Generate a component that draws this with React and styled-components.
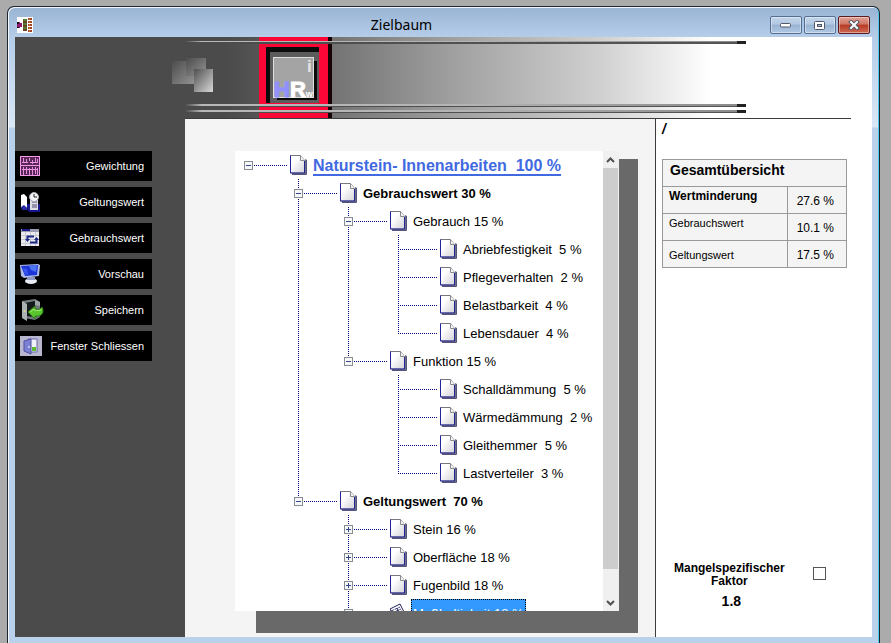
import { useState } from "react";
import styled, { createGlobalStyle } from "styled-components";

const GlobalStyle = createGlobalStyle`
  * {
    box-sizing: border-box;
  }
  body {
    margin: 0;
    background: #ababab;
    font-family: "Liberation Sans", Arial, sans-serif;
    color: #000;
  }
  button {
    font: inherit;
    border: none;
    padding: 0;
    cursor: pointer;
  }
`;

const Desktop = styled.div`
  display: flex;
  height: 100vh;
  padding: 6px 11px 0 7px;
`;

const Window = styled.div`
  flex: 1;
  display: flex;
  flex-direction: column;
  min-width: 0;
  padding: 0 7px 6px;
  border: 1px solid #1c2530;
  border-bottom: none;
  border-radius: 7px 7px 0 0;
  background: linear-gradient(
    #98b4d3 0,
    #b5cde9 30px,
    #d9e7f6 120px,
    #b9d1ea 121px
  );
  box-shadow: inset 1px 1px 0 #f4f8fc, inset -1px 0 0 #4fc8ec;
`;

/* title bar */

const TitleBar = styled.div`
  display: flex;
  align-items: center;
  height: 30px;
  padding: 6px 2px 0;
`;

const Title = styled.h1`
  flex: 1;
  margin: 0;
  text-align: center;
  font-family: "Noto Sans", "Open Sans", sans-serif;
  font-size: 14px;
  font-weight: 400;
  line-height: 20px;
`;

const WindowControls = styled.div`
  display: flex;
  gap: 2px;
`;

const ControlButton = styled.button`
  display: flex;
  align-items: center;
  justify-content: center;
  width: 32px;
  height: 18px;
  border: 1px solid ${(props) => (props.$close ? "#5b1a1f" : "#546f91")};
  border-radius: 2px;
  background: ${(props) =>
    props.$close
      ? "linear-gradient(#e0a396 0, #cf7565 45%, #b73a24 50%, #cf6a52 100%)"
      : "linear-gradient(#c3d5ea 0, #b2c8e2 45%, #98b4d3 50%, #b0c8e3 100%)"};
  box-shadow: inset 0 0 0 1px rgba(255, 255, 255, 0.4);
`;

/* banner */

const Content = styled.div`
  flex: 1;
  display: flex;
  flex-direction: column;
  min-height: 0;
  background: #fff;
`;

const Header = styled.header`
  background: linear-gradient(90deg, #4b4b4b 170px, #fff 170px);
`;

const Banner = styled.svg`
  display: block;
`;

const Rule = styled.div`
  height: 1px;
  margin: 0 21px 0 170px;
  background: #3c3c3c;
`;

const Main = styled.div`
  flex: 1;
  display: flex;
  min-height: 0;
`;

/* sidebar */

const Sidebar = styled.nav`
  display: flex;
  flex-direction: column;
  gap: 6px;
  width: 170px;
  padding: 32px 33px 0 0;
  background: #4b4b4b;
`;

const SidebarButton = styled.button`
  display: flex;
  align-items: center;
  justify-content: space-between;
  height: 30px;
  padding: 0 8px 0 5px;
  background: #000;
  color: #fff;
  font-size: 11px;
  white-space: nowrap;
`;

/* tree */

const TreeArea = styled.main`
  flex: 1;
  display: grid;
  grid-template-rows: minmax(0, 1fr);
  min-width: 0;
  padding: 32px 17px 4px 50px;
  background: #f4f4f4;
`;

const TreeShadow = styled.div`
  grid-area: 1 / 1;
  margin: 8px 0 0 21px;
  background: #696969;
`;

const TreePanel = styled.div`
  grid-area: 1 / 1;
  display: flex;
  margin: 0 19px 22px 0;
  background: #fff;
  overflow: hidden;
`;

const TreeScroll = styled.div`
  flex: 1;
  min-width: 0;
  overflow: hidden;
`;

const Branch = styled.ul`
  margin: 0;
  padding: 0 0 0 ${(props) => (props.$root ? "0" : "50px")};
  list-style: none;
`;

const Leaf = styled.li`
  background: ${(props) =>
    props.$root
      ? "none"
      : "repeating-linear-gradient(#000080 0 1px, transparent 1px 2px) 13px 0 / 1px 100% no-repeat"};

  &:last-child {
    background-size: 1px 14px;
  }
`;

const Row = styled.div`
  display: flex;
  align-items: center;
  height: 28px;
  padding-left: ${(props) => (props.$expandable ? "9px" : "13px")};
`;

const Expander = styled.button`
  display: flex;
  width: 9px;
  height: 9px;
  background: #fff;
`;

const Connector = styled.div`
  width: ${(props) => (props.$long ? "39px" : "33px")};
  height: 1px;
  margin: 0 3px 0 ${(props) => (props.$long ? "0" : "1px")};
  background: repeating-linear-gradient(
    90deg,
    #000080 0 1px,
    transparent 1px 2px
  );
`;

const Label = styled.span`
  align-self: stretch;
  margin-left: 4px;
  padding: 0 1px;
  border: 1px dotted ${(props) => (props.$selected ? "#000" : "transparent")};
  background: ${(props) => (props.$selected ? "#3399ff" : "none")};
  color: ${(props) => (props.$selected ? "#fff" : "#000")};
  font-size: 13px;
  font-weight: ${(props) => (props.$bold ? "700" : "400")};
  line-height: 28px;
  white-space: pre;
`;

const RootLabel = styled(Label)`
  color: #4169e1;
  font-size: 16px;
  font-weight: 700;
  text-decoration: underline 2px;
  text-underline-offset: 3px;
`;

const Scrollbar = styled.div`
  display: flex;
  flex-direction: column;
  width: 16px;
  padding-right: 1px;
  background: #f0f0f0;
`;

const ScrollButton = styled.button`
  display: flex;
  align-items: center;
  justify-content: center;
  height: 17px;
  background: #f0f0f0;
`;

const ScrollTrack = styled.div`
  flex: 1;
  padding-bottom: 25px;
`;

const ScrollThumb = styled.div`
  height: 100%;
  background: #cdcdcd;
`;

/* summary */

const Summary = styled.aside`
  display: flex;
  flex-direction: column;
  width: 217px;
  padding: 0 25px 28px 6px;
  border-left: 1px solid #3c3c3c;
`;

const Path = styled.div`
  height: 40px;
  font-size: 14px;
  font-weight: 700;
  font-style: italic;
  line-height: 20px;
`;

const SummaryTable = styled.table`
  width: 100%;
  border-collapse: collapse;
  table-layout: fixed;
  background: #f4f4f4;
  font-size: 12px;
`;

const TableTitle = styled.th`
  height: 27px;
  padding: 0 7px 6px;
  border: 1px solid #999;
  font-size: 14px;
  line-height: 16px;
  text-align: left;
`;

const NameCell = styled.th`
  width: 125px;
  height: 27px;
  padding: ${(props) => (props.$low ? "2px 6px 0" : "0 6px 8px")};
  border: 1px solid #999;
  font-size: ${(props) => (props.$strong ? "12px" : "11px")};
  font-weight: ${(props) => (props.$strong ? "700" : "400")};
  line-height: 14px;
  text-align: left;
`;

const ValueCell = styled.td`
  height: 27px;
  padding: 2px 12px 0 0;
  border: 1px solid #999;
  font-size: 12px;
  line-height: 14px;
  text-align: right;
  white-space: nowrap;
`;

const Factor = styled.div`
  display: flex;
  align-items: flex-start;
  justify-content: space-between;
  margin-top: auto;
  padding: 0 21px 0 12px;
`;

const FactorLabel = styled.label`
  font-size: 12px;
  font-weight: 700;
  line-height: 13px;
  text-align: center;
`;

const FactorValue = styled.output`
  display: block;
  margin-top: 5px;
  padding-left: 4px;
  font-size: 14px;
  line-height: 16px;
`;

const Checkbox = styled.input`
  appearance: none;
  width: 13px;
  height: 13px;
  margin: 5px 0 0;
  border: 1px solid #555;
  background: #fff;

  &:checked {
    background: #555;
    box-shadow: inset 0 0 0 2px #fff;
  }
`;

const tree = {
  label: "Naturstein- Innenarbeiten  100 %",
  children: [
    {
      label: "Gebrauchswert 30 %",
      bold: true,
      children: [
        {
          label: "Gebrauch 15 %",
          children: [
            { label: "Abriebfestigkeit  5 %" },
            { label: "Pflegeverhalten  2 %" },
            { label: "Belastbarkeit  4 %" },
            { label: "Lebensdauer  4 %" },
          ],
        },
        {
          label: "Funktion 15 %",
          children: [
            { label: "Schalldämmung  5 %" },
            { label: "Wärmedämmung  2 %" },
            { label: "Gleithemmer  5 %" },
            { label: "Lastverteiler  3 %" },
          ],
        },
      ],
    },
    {
      label: "Geltungswert  70 %",
      bold: true,
      children: [
        { label: "Stein 16 %", children: [] },
        { label: "Oberfläche 18 %", children: [] },
        { label: "Fugenbild 18 %", children: [] },
        { label: "Maßhaltigkeit 18 %", children: [], selected: true },
      ],
    },
  ],
};

const PageIcon = () => (
  <svg width="17" height="20" viewBox="0 0 17 20">
    <defs>
      <linearGradient id="paper" x1="0" y1="0" x2="1" y2="1">
        <stop offset="0.3" stopColor="#fff" />
        <stop offset="1" stopColor="#d2d2d8" />
      </linearGradient>
    </defs>
    <path d="M2 19h15V5l-2-1v14H2z" fill="#6f6f86" />
    <path d="M16.500 5v14.500H2" fill="none" stroke="#55557c" />
    <path d="M.5.500h10l4 5v12.500H.5z" fill="url(#paper)" stroke="#77777f" />
    <path d="M14.500 6v12" stroke="#25259a" />
    <path d="M.5.500v17.500h14" fill="none" stroke="#25259a" />
    <path d="M10.500.500v5h4" fill="#f4f4f4" stroke="#8a8a90" />
  </svg>
);

const NotesIcon = () => (
  <svg width="17" height="20" viewBox="0 0 17 20">
    <path d="M0 6l10-5 6 12-10 6z" fill="#fff" stroke="#23235a" />
    <path
      d="M1 8l9-4M2 10l9-4M3 12l9-4M4 14l9-4"
      stroke="#3c3c78"
      strokeDasharray="3 1"
    />
    <path d="M7 5l4 8" stroke="#23235a" />
  </svg>
);

const ExpanderIcon = ({ open }) => (
  <svg width="9" height="9" viewBox="0 0 9 9" shapeRendering="crispEdges">
    <rect x="0.5" y="0.5" width="8" height="8" fill="#f7f7f7" stroke="#858c94" />
    <path d="M2 4.500h5" stroke="#33478c" />
    {!open && <path d="M4.500 2v5" stroke="#33478c" />}
  </svg>
);

const TreeNode = ({ node, root }) => {
  const [open, setOpen] = useState(Boolean(node.children?.length));
  const expandable = Boolean(node.children);

  return (
    <Leaf $root={root}>
      <Row $expandable={expandable}>
        {expandable && (
          <Expander
            type="button"
            aria-label={node.label}
            aria-expanded={open}
            onClick={() => setOpen(!open)}
          >
            <ExpanderIcon open={open} />
          </Expander>
        )}
        <Connector $long={!expandable} />
        {node.selected ? <NotesIcon /> : <PageIcon />}
        {root ? (
          <RootLabel>{node.label}</RootLabel>
        ) : (
          <Label $bold={node.bold} $selected={node.selected}>
            {node.label}
          </Label>
        )}
      </Row>
      {open && node.children?.length > 0 && (
        <Branch>
          {node.children.map((child) => (
            <TreeNode key={child.label} node={child} />
          ))}
        </Branch>
      )}
    </Leaf>
  );
};

const AppIcon = () => (
  <svg width="16" height="16" viewBox="0 0 16 16">
    <rect width="16" height="16" fill="#fff" />
    <path d="M0 5h3v1h2v4H3v1H0z" fill="#8c1a6e" />
    <path d="M0 5h2v2H0zM0 10h2v1H0z" fill="#111" />
    <path d="M6 2h4v12H6z" fill="#5a6b2c" />
    <path d="M6 5h4M6 9h4M6 13h4" stroke="#7a1c1c" />
    <path d="M7 3h2M7 7h2M7 11h2" stroke="#3f9c3f" />
    <path
      d="M11 1h4v2h-4zM11 4h4v2h-4zM11 7h4v2h-4zM11 10h4v2h-4zM11 13h4v2h-4z"
      fill="#a3452a"
    />
    <path d="M12 2h1M12 5h1M12 8h1M12 11h1M12 14h1" stroke="#e8a030" />
  </svg>
);

const GridIcon = () => (
  <svg width="20" height="20" viewBox="0 0 20 20">
    <rect x="0.500" y="0.500" width="19" height="19" fill="#5a2858" stroke="#f29be8" />
    <path
      d="M1 9.500h18M2 6.500h6M10 6.500h7M2 13.500h16"
      stroke="#f29be8"
      strokeWidth="1"
    />
    <path
      d="M3.500 2v5M6.500 3v4M9.500 2v3M12.500 4v4M15.500 2v5M17.500 3v4M3.500 11v8M6.500 11v7M9.500 12v7M12.500 11v8M15.500 11v7M17.500 12v7"
      stroke="#e58bdc"
    />
  </svg>
);

const ReportIcon = () => (
  <svg width="20" height="20" viewBox="0 0 20 20">
    <path d="M7 12h13v8H9l-2-3z" fill="#17178c" />
    <path d="M1 3l3-1 3 3v11l-3-2-3 2z" fill="#fff" />
    <path d="M1 15l3-2 3 3v2H2z" fill="#2828a0" />
    <path d="M10 7h8v11h-8z" fill="#dcdce8" />
    <path d="M12 10h5M12 13h5M12 15h5" stroke="#4a4a70" />
    <circle cx="14" cy="5" r="4.500" fill="#f4f4f4" stroke="#a8a8b4" />
    <path d="M14 2v3h3" fill="none" stroke="#222" />
  </svg>
);

const CalendarIcon = () => (
  <svg width="20" height="20" viewBox="0 0 20 20">
    <rect x="1" y="1" width="18" height="17" fill="#e9e9ee" />
    <path d="M1 1h18v3H1z" fill="#9a9ab0" />
    <path d="M2 2h8" stroke="#1c1c84" strokeWidth="2" />
    <path d="M1 7.500h18M1 11.500h18M1 15.500h18M5.500 4v14M10.500 4v14M15.500 4v14" stroke="#c8c8d4" />
    <path d="M7.500 12V8.500H14M16.500 10v4.500H10" fill="none" stroke="#1d2a84" strokeWidth="2" />
    <path d="M5 11h5l-2.500 3zM14 12h5l-2.500-3z" fill="#1d2a84" />
  </svg>
);

const MonitorIcon = () => (
  <svg width="20" height="20" viewBox="0 0 20 20">
    <path d="M0 1l18-1 2 1-1 11-15 2-3-2z" fill="#aebbe8" />
    <path d="M1 2l17-1-1 10-12 1z" fill="#1d35d8" />
    <path d="M9 2l8-1-1 7-5-2z" fill="#4d76f2" />
    <path d="M3 4l4 1 1 5-3 1z" fill="#3556ee" />
    <ellipse cx="11" cy="17" rx="6" ry="3" fill="#e9ecf4" />
    <path d="M7 13h8v3H7z" fill="#8f9ac4" />
  </svg>
);

const SaveIcon = () => (
  <svg width="24" height="24" viewBox="0 0 24 24">
    <path d="M2 3l13-2 5 3v15l-5 3-11-2z" fill="#71797c" />
    <path d="M5 5l10-2v16l-10-1z" fill="#141a1a" />
    <path d="M2 3l5 3v17l-5-3z" fill="#aab1b3" />
    <path d="M15 2l5 2v4l-5-1z" fill="#9fa6a8" />
    <circle cx="4.500" cy="13" r="1" fill="#e0d890" />
    <path
      d="M8 14l7-6v3c4 1 6 0 7-2 3 6-1 10-7 9v3z"
      fill="#59c52c"
      stroke="#2c7d17"
    />
    <path d="M10 14l4-3v1c4 1 6 1 8-1" fill="none" stroke="#a8ee78" />
  </svg>
);

const DoorIcon = () => (
  <svg width="22" height="20" viewBox="0 0 22 20">
    <rect width="22" height="20" fill="#b9b6cf" />
    <path d="M8 3h9v13H8z" fill="#f0f1fa" stroke="#6868a6" />
    <path d="M12 11h4v4h-4z" fill="#5bbb32" />
    <path d="M4 5l7-2v15l-7-3z" fill="#7c80d2" stroke="#4f4f9c" />
    <path d="M9 10v2" stroke="#fff" />
  </svg>
);

const menu = [
  { label: "Gewichtung", Icon: GridIcon },
  { label: "Geltungswert", Icon: ReportIcon },
  { label: "Gebrauchswert", Icon: CalendarIcon },
  { label: "Vorschau", Icon: MonitorIcon },
  { label: "Speichern", Icon: SaveIcon },
  { label: "Fenster Schliessen", Icon: DoorIcon },
];

const BannerArt = () => (
  <Banner width="732" height="81" viewBox="0 0 732 81" aria-hidden="true">
    <defs>
      <linearGradient id="fade" gradientUnits="userSpaceOnUse" x1="0" x2="732" y1="0" y2="0">
        <stop offset="0.29" stopColor="#4b4b4b" />
        <stop offset="0.34" stopColor="#565656" />
        <stop offset="0.44" stopColor="#757575" />
        <stop offset="0.6" stopColor="#a0a0a0" />
        <stop offset="0.8" stopColor="#d0d0d0" />
        <stop offset="0.95" stopColor="#fff" />
      </linearGradient>
      <linearGradient id="line" x1="0" x2="1" y1="0" y2="0">
        <stop offset="0" stopColor="#4b4b4b" />
        <stop offset="0.03" stopColor="#b8b8b8" />
        <stop offset="0.5" stopColor="#b4b4b4" />
        <stop offset="1" stopColor="#8a8a8a" />
      </linearGradient>
      <linearGradient id="lineShade" x1="0" x2="1" y1="0" y2="0">
        <stop offset="0" stopColor="#4b4b4b" />
        <stop offset="1" stopColor="#555" />
      </linearGradient>
      <linearGradient id="squareA" x1="0" x2="1" y1="0" y2="1">
        <stop offset="0" stopColor="#4d4d4d" />
        <stop offset="1" stopColor="#929292" />
      </linearGradient>
      <linearGradient id="squareB" x1="0" x2="1" y1="0" y2="1">
        <stop offset="0" stopColor="#4f4f4f" />
        <stop offset="1" stopColor="#d8d8d8" />
      </linearGradient>
    </defs>
    <rect width="732" height="81" fill="url(#fade)" />

    <rect x="157" y="24" width="22" height="23" fill="url(#squareA)" />
    <rect x="171" y="21" width="20" height="18" fill="url(#squareA)" />
    <rect x="179" y="32" width="19" height="23" fill="url(#squareB)" />

    <rect x="313" width="4" height="81" fill="#160306" />
    <rect x="244" width="69" height="81" fill="#fb0636" />
    <rect x="251" y="10" width="53" height="56" fill="#0c0c0c" />
    <rect x="255" y="15" width="49" height="51" fill="#5c5c5c" />
    <rect x="262" y="24" width="40" height="39" fill="#0a0a0a" />
    <rect x="258.500" y="20.500" width="40" height="40" fill="#a4a4a4" stroke="#dedede" />
    <g fontFamily="Liberation Sans, sans-serif" fontWeight="700">
      <text x="259" y="60" fontSize="22" fill="#9090ff" stroke="#9090ff">
        H
        <tspan fill="#fff" stroke="#fff">R</tspan>
        <tspan fill="#fff" stroke="none" fontSize="9">w</tspan>
      </text>
      <text x="292" y="35" fontSize="17" fill="#e4e4e4">i</text>
    </g>

    <rect x="170" y="4" width="560" height="1" fill="url(#line)" />
    <rect x="170" y="5" width="560" height="2" fill="url(#lineShade)" />
    <rect x="170" y="67" width="560" height="2" fill="url(#line)" />
    <rect x="170" y="69" width="560" height="1" fill="url(#lineShade)" />
    <rect x="170" y="73" width="560" height="2" fill="url(#line)" />
    <rect x="170" y="75" width="560" height="1" fill="url(#lineShade)" />
    <path d="M722 5.500h9M722 68.500h9M722 74.500h9" stroke="#222" strokeWidth="3" />
  </Banner>
);

const App = () => {
  const [checked, setChecked] = useState(false);

  return (
    <>
      <GlobalStyle />
      <Desktop>
        <Window>
          <TitleBar>
            <AppIcon />
            <Title>Zielbaum</Title>
            <WindowControls>
              <ControlButton type="button" aria-label="Minimieren">
                <svg width="12" height="6" viewBox="0 0 12 6">
                  <rect x="0.500" y="1.500" width="10" height="3.500" rx="1" fill="#fff" stroke="#535666" />
                </svg>
              </ControlButton>
              <ControlButton type="button" aria-label="Maximieren">
                <svg width="12" height="9" viewBox="0 0 12 9">
                  <rect x="0.500" y="0.500" width="10" height="8" rx="1" fill="#fff" stroke="#535666" />
                  <rect x="3.500" y="3.500" width="4" height="2" fill="#a5bcd8" stroke="#535666" />
                </svg>
              </ControlButton>
              <ControlButton type="button" aria-label="Schließen" $close>
                <svg width="12" height="10" viewBox="0 0 12 10">
                  <path d="M3 2l6 6M9 2l-6 6" stroke="#535666" strokeWidth="4" strokeLinecap="square" />
                  <path d="M3 2l6 6M9 2l-6 6" stroke="#fff" strokeWidth="2" strokeLinecap="square" />
                </svg>
              </ControlButton>
            </WindowControls>
          </TitleBar>
          <Content>
            <Header>
              <BannerArt />
              <Rule />
            </Header>
            <Main>
              <Sidebar>
                {menu.map(({ label, Icon }) => (
                  <SidebarButton key={label} type="button">
                    <Icon />
                    {label}
                  </SidebarButton>
                ))}
              </Sidebar>
              <TreeArea>
                <TreeShadow />
                <TreePanel>
                  <TreeScroll>
                    <Branch $root>
                      <TreeNode node={tree} root />
                    </Branch>
                  </TreeScroll>
                  <Scrollbar>
                    <ScrollButton type="button" aria-label="Nach oben">
                      <svg width="9" height="6" viewBox="0 0 9 6">
                        <path d="M1 5l3.500-3.500L8 5" fill="none" stroke="#505050" strokeWidth="2" />
                      </svg>
                    </ScrollButton>
                    <ScrollTrack>
                      <ScrollThumb />
                    </ScrollTrack>
                    <ScrollButton type="button" aria-label="Nach unten">
                      <svg width="9" height="6" viewBox="0 0 9 6">
                        <path d="M1 1l3.500 3.500L8 1" fill="none" stroke="#505050" strokeWidth="2" />
                      </svg>
                    </ScrollButton>
                  </Scrollbar>
                </TreePanel>
              </TreeArea>
              <Summary>
                <Path>/</Path>
                <SummaryTable>
                  <colgroup>
                    <col width="125" />
                    <col />
                  </colgroup>
                  <thead>
                    <tr>
                      <TableTitle colSpan={2}>Gesamtübersicht</TableTitle>
                    </tr>
                  </thead>
                  <tbody>
                    <tr>
                      <NameCell scope="row" $strong>
                        Wertminderung
                      </NameCell>
                      <ValueCell>27.6 %</ValueCell>
                    </tr>
                    <tr>
                      <NameCell scope="row">Gebrauchswert</NameCell>
                      <ValueCell>10.1 %</ValueCell>
                    </tr>
                    <tr>
                      <NameCell scope="row" $low>
                        Geltungswert
                      </NameCell>
                      <ValueCell>17.5 %</ValueCell>
                    </tr>
                  </tbody>
                </SummaryTable>
                <Factor>
                  <FactorLabel htmlFor="factor">
                    Mangelspezifischer
                    <br />
                    Faktor
                    <FactorValue>1.8</FactorValue>
                  </FactorLabel>
                  <Checkbox
                    id="factor"
                    type="checkbox"
                    checked={checked}
                    onChange={(event) => setChecked(event.target.checked)}
                  />
                </Factor>
              </Summary>
            </Main>
          </Content>
        </Window>
      </Desktop>
    </>
  );
};

export default App;
